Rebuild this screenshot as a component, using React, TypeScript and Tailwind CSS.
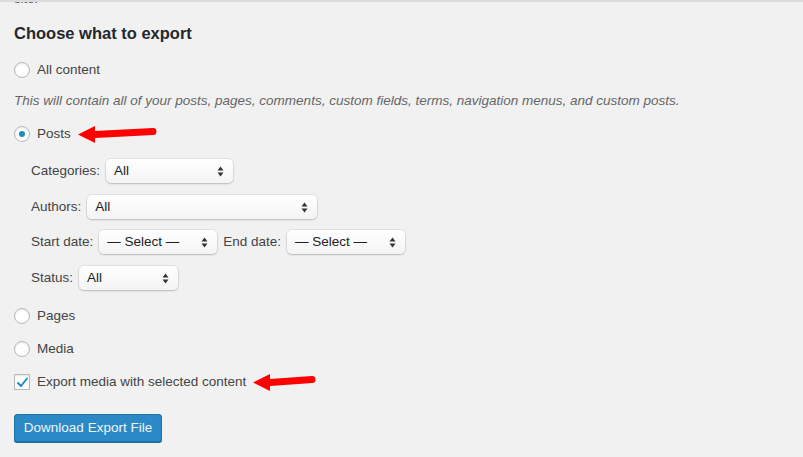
import type { ReactNode } from "react";

const font = { fontFamily: '"Liberation Sans", Arial, sans-serif' };

function Radio({ checked = false }: { checked?: boolean }) {
  return (
    <span className="flex h-[16px] w-[16px] shrink-0 items-center justify-center rounded-full border border-[#b4b9be] bg-white shadow-[inset_0_1px_2px_rgba(0,0,0,0.1)]">
      {checked && <span className="h-[6px] w-[6px] rounded-full bg-[#1e8cbe]" />}
    </span>
  );
}

function Checkbox() {
  return (
    <span className="flex h-[16px] w-[16px] shrink-0 items-center justify-center border border-[#b4b9be] bg-white shadow-[inset_0_1px_2px_rgba(0,0,0,0.1)]">
      <svg width="13" height="13" viewBox="0 0 13 13">
        <path d="M2 7 L5 10 L11 2.5" fill="none" stroke="#1e8cbe" strokeWidth="2" strokeLinecap="round" strokeLinejoin="round" />
      </svg>
    </span>
  );
}

function Select({ value, width }: { value: string; width: string }) {
  return (
    <div
      className={`flex h-[24px] ${width} items-center justify-between rounded-[5px] bg-gradient-to-b from-white to-[#f4f4f4] pl-[8px] pr-[9px] text-[13.5px] text-[#222] shadow-[0_0_0_1px_rgba(0,0,0,0.06),0_1px_2px_rgba(0,0,0,0.18)]`}
    >
      <span>{value}</span>
      <svg width="7" height="11" viewBox="0 0 7 11">
        <path d="M0.5 4.5 L3.5 0.5 L6.5 4.5 Z" fill="#333" />
        <path d="M0.5 6.5 L3.5 10.5 L6.5 6.5 Z" fill="#333" />
      </svg>
    </div>
  );
}

function Arrow({ length }: { length: number }) {
  return (
    <svg width={length + 2} height="20" viewBox={`0 0 ${length + 2} 20`} className="shrink-0">
      <path d={`M${17} 10.5 L${length - 3} 7.5`} stroke="#ff0000" strokeWidth="7" strokeLinecap="round" />
      <path d="M0 10.5 L17 2 L17 19 Z" fill="#ff0000" />
    </svg>
  );
}

function Row({ className, children }: { className: string; children: ReactNode }) {
  return <div className={`flex items-center ${className}`}>{children}</div>;
}

export default function App() {
  return (
    <div className="h-[457px] w-[803px] overflow-hidden bg-[#f1f1f1] text-[13.5px] text-[#444]" style={font}>
      <div className="h-[5px] overflow-hidden border-t-2 border-[#dcdcdc]">
        <div className="-mt-[10px] pl-[14px] text-[13px] leading-[14px] text-[#555]">site.</div>
      </div>

      <div className="pl-[14px]">
        <h2 className="mt-[16px] text-[16.5px] font-semibold leading-[24px] text-[#23282d]">Choose what to export</h2>

        <Row className="mt-[15px] h-[20px] gap-[7px]">
          <Radio />
          <span>All content</span>
        </Row>

        <p className="mt-[11px] italic leading-[20px] text-[#666]">
          This will contain all of your posts, pages, comments, custom fields, terms, navigation menus, and custom posts.
        </p>

        <Row className="mt-[13px] h-[20px] gap-[7px]">
          <Radio checked />
          <span>Posts</span>
          <Arrow length={78} />
        </Row>

        <div className="pl-[17px]">
          <Row className="mt-[15px] gap-[6px]">
            <span>Categories:</span>
            <Select value="All" width="w-[127px]" />
          </Row>
          <Row className="mt-[12px] gap-[6px]">
            <span>Authors:</span>
            <Select value="All" width="w-[230px]" />
          </Row>
          <Row className="mt-[11px] gap-[6px]">
            <span>Start date:</span>
            <Select value="— Select —" width="w-[118px]" />
            <span>End date:</span>
            <Select value="— Select —" width="w-[118px]" />
          </Row>
          <Row className="mt-[12px] gap-[6px]">
            <span>Status:</span>
            <Select value="All" width="w-[99px]" />
          </Row>
        </div>

        <Row className="mt-[16px] h-[20px] gap-[7px]">
          <Radio />
          <span>Pages</span>
        </Row>
        <Row className="mt-[13px] h-[20px] gap-[7px]">
          <Radio />
          <span>Media</span>
        </Row>
        <Row className="mt-[13px] h-[20px] gap-[7px]">
          <Checkbox />
          <span>Export media with selected content</span>
          <Arrow length={62} />
        </Row>

        <button className="mt-[22px] h-[28px] w-[148px] rounded-[3px] border border-[#1f74ab] bg-[#2b89c5] text-[13.5px] text-[#eef5fa] shadow-[0_1px_0_#1f6a9c]">
          Download Export File
        </button>
      </div>
    </div>
  );
}
